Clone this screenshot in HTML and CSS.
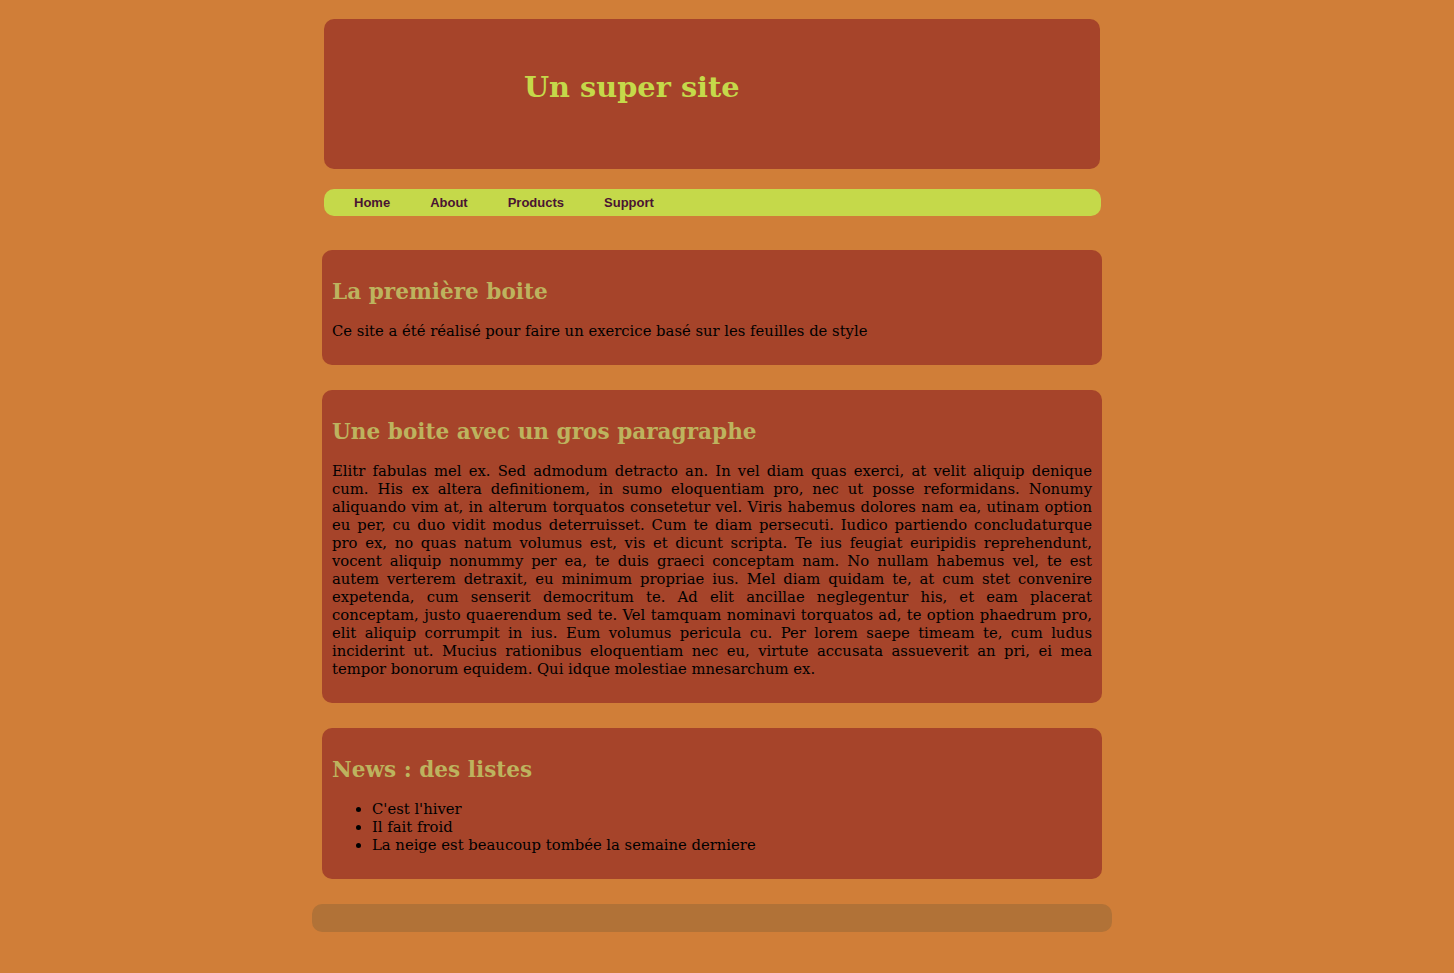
FILE: index.html
```html
<!DOCTYPE html>
<html lang="fr">
<head>
<meta charset="utf-8">
<title>Un super site</title>
<link rel="stylesheet" href="styles.css">
</head>
<body>
<div class="page">
  <header class="banner">
    <h1 class="site-title">Un super site</h1>
  </header>
  <nav class="menu">
    <a class="menu-link" href="#">Home</a>
    <a class="menu-link" href="#">About</a>
    <a class="menu-link" href="#">Products</a>
    <a class="menu-link" href="#">Support</a>
  </nav>
  <section class="box">
    <h2 class="box-title">La première boite</h2>
    <p class="box-text">Ce site a été réalisé pour faire un exercice basé sur les feuilles de style</p>
  </section>
  <section class="box">
    <h2 class="box-title">Une boite avec un gros paragraphe</h2>
    <p class="box-text justified">Elitr fabulas mel ex. Sed admodum detracto an. In vel diam quas exerci, at velit aliquip denique cum. His ex altera definitionem, in sumo eloquentiam pro, nec ut posse reformidans. Nonumy aliquando vim at, in alterum torquatos consetetur vel. Viris habemus dolores nam ea, utinam option eu per, cu duo vidit modus deterruisset. Cum te diam persecuti. Iudico partiendo concludaturque pro ex, no quas natum volumus est, vis et dicunt scripta. Te ius feugiat euripidis reprehendunt, vocent aliquip nonummy per ea, te duis graeci conceptam nam. No nullam habemus vel, te est autem verterem detraxit, eu minimum propriae ius. Mel diam quidam te, at cum stet convenire expetenda, cum senserit democritum te. Ad elit ancillae neglegentur his, et eam placerat conceptam, justo quaerendum sed te. Vel tamquam nominavi torquatos ad, te option phaedrum pro, elit aliquip corrumpit in ius. Eum volumus pericula cu. Per lorem saepe timeam te, cum ludus inciderint ut. Mucius rationibus eloquentiam nec eu, virtute accusata assueverit an pri, ei mea tempor bonorum equidem. Qui idque molestiae mnesarchum ex.</p>
  </section>
  <section class="box">
    <h2 class="box-title">News : des listes</h2>
    <ul class="box-list">
      <li>C'est l'hiver</li>
      <li>Il fait froid</li>
      <li>La neige est beaucoup tombée la semaine derniere</li>
    </ul>
  </section>
  <footer class="foot"></footer>
</div>
</body>
</html>
```

FILE: styles.css
```css
html, body {
  margin: 0;
  padding: 0;
  background: #d07e38;
}

body {
  font-family: "DejaVu Serif", serif;
  font-size: 14.8px;
  line-height: 18px;
  color: #000;
  padding-top: 19px;
  padding-bottom: 40px;
}

.page {
  width: 800px;
  margin-left: calc(50% - 415px);
}

.banner {
  margin: 0 12px;
  height: 150px;
  box-sizing: border-box;
  padding: 51px 0 0 200px;
  background: #a6442a;
  border-radius: 10px;
}

.site-title {
  margin: 0;
  font-size: 28.8px;
  line-height: normal;
  font-weight: bold;
  color: #c5d94a;
}

.menu {
  margin: 20px 11px 0 12px;
  height: 27px;
  padding-left: 10px;
  display: flex;
  align-items: center;
  background: #c5d94a;
  border-radius: 10px;
}

.menu-link {
  padding: 0 20px;
  font-family: "Liberation Sans", Arial, sans-serif;
  font-size: 13px;
  font-weight: bold;
  color: #4a1432;
  text-decoration: none;
  line-height: 27px;
}

.box {
  margin: 25px 10px 0;
  padding: 10px;
  background: #a6442a;
  border-radius: 10px;
  display: flow-root;
}

.menu + .box {
  margin-top: 34px;
}

.box-title {
  font-size: 21.6px;
  line-height: normal;
  font-weight: bold;
  color: #bdb35e;
  margin: 19px 0 18px;
}

.box-text {
  margin: 15px 0;
}

.justified {
  text-align: justify;
  word-spacing: -0.08px;
}

.box-list {
  margin: 15px 0;
  padding-left: 40px;
}

.box-list li {
  line-height: 18px;
}

.foot {
  margin-top: 25px;
  height: 28px;
  background: #b17237;
  border-radius: 10px;
}
```
